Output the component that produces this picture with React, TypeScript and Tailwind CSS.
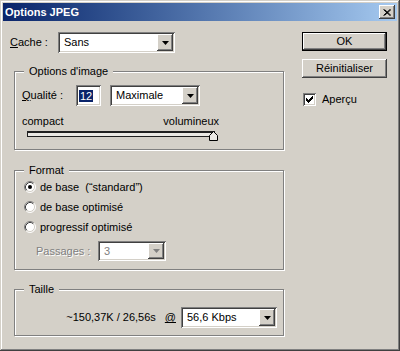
import React from 'react'

// Windows classic bevels
const sunken =
  'shadow-[inset_1px_1px_0_#808080,inset_-1px_-1px_0_#ffffff,inset_2px_2px_0_#404040,inset_-2px_-2px_0_#d4d0c8]'
const raised =
  'shadow-[inset_-1px_-1px_0_#404040,inset_1px_1px_0_#ffffff,inset_-2px_-2px_0_#808080,inset_2px_2px_0_#d4d0c8]'

function Arrow({ disabled }: { disabled?: boolean }) {
  return (
    <svg width="7" height="4" viewBox="0 0 7 4">
      <path d="M0 0h7L3.5 4z" fill={disabled ? '#808080' : '#000'} />
    </svg>
  )
}

function Combo({ value, className, disabled }: { value: string; className: string; disabled?: boolean }) {
  return (
    <div className={`flex bg-white p-[2px] ${sunken} ${className}`}>
      <span className={`flex-1 pl-[4px] self-center leading-[13px] ${disabled ? 'text-[#808080]' : 'text-black'}`}>
        {value}
      </span>
      <span className={`flex w-[16px] items-center justify-center bg-[#d4d0c8] ${raised}`}>
        <Arrow disabled={disabled} />
      </span>
    </div>
  )
}

function Radio({ checked }: { checked?: boolean }) {
  return (
    <svg width="12" height="12" viewBox="0 0 12 12" className="shrink-0">
      <circle cx="6" cy="6" r="5" fill="#fff" />
      <path d="M2.11 9.89A5.5 5.5 0 0 1 9.89 2.11" fill="none" stroke="#808080" />
      <path d="M9.89 2.11A5.5 5.5 0 0 1 2.11 9.89" fill="none" stroke="#fff" />
      <path d="M2.82 9.18A4.5 4.5 0 0 1 9.18 2.82" fill="none" stroke="#404040" />
      <path d="M9.18 2.82A4.5 4.5 0 0 1 2.82 9.18" fill="none" stroke="#d4d0c8" />
      {checked && <circle cx="6" cy="6" r="2" fill="#000" />}
    </svg>
  )
}

function Group({ title, className, children }: { title: string; className: string; children: React.ReactNode }) {
  return (
    <fieldset
      className={`ml-[4px] w-[270px] border border-[#808080] shadow-[inset_1px_1px_0_#ffffff,1px_1px_0_#ffffff] ${className}`}
    >
      <legend className="ml-[9px] bg-[#d4d0c8] px-[5px] leading-[13px]">{title}</legend>
      {children}
    </fieldset>
  )
}

export default function App() {
  return (
    <div className="flex h-[351px] w-[400px] flex-col bg-[#d4d0c8] p-[3px] font-['Liberation_Sans',Arial,sans-serif] text-[11px] text-black shadow-[inset_-1px_-1px_0_#404040,inset_1px_1px_0_#d4d0c8,inset_-2px_-2px_0_#808080,inset_2px_2px_0_#ffffff]">
      {/* Title bar */}
      <div className="flex h-[18px] items-center justify-between bg-gradient-to-r from-[#0a246a] to-[#a6caf0] pl-[2px] pr-[2px]">
        <span className="font-bold text-white">Options JPEG</span>
        <button className={`flex h-[14px] w-[16px] items-center justify-center bg-[#d4d0c8] ${raised}`}>
          <svg width="8" height="7" viewBox="0 0 8 7">
            <path d="M0.5 0.5L7 6.5M1.5 0.5L8 6.5M7 0.5L0.5 6.5M8 0.5L1.5 6.5" stroke="#000" strokeWidth="1" />
          </svg>
        </button>
      </div>

      <div className="flex pt-[11px]">
        {/* Left column */}
        <div className="w-[283px] pl-[7px]">
          <div className="flex h-[21px] items-center">
            <span className="w-[48px]">
              <span className="underline">C</span>ache :
            </span>
            <Combo value="Sans" className="h-[21px] w-[117px]" />
          </div>

          <Group title="Options d'image" className="mt-[12px] pb-[8px]">
            <div className="flex h-[21px] items-center pl-[7px] pt-0 mt-[7px]">
              <span className="w-[54px]">
                <span className="underline">Q</span>ualité :
              </span>
              <div className={`flex h-[21px] w-[25px] items-center bg-white pl-[2px] ${sunken}`}>
                <span className="ml-[1px] bg-[#0a246a] px-[1px] leading-[12px] text-white">12</span>
              </div>
              <Combo value="Maximale" className="ml-[9px] h-[21px] w-[90px]" />
            </div>
            <div className="mt-[9px] flex w-[204px] justify-between pl-[7px] leading-[13px]">
              <span>compact</span>
              <span>volumineux</span>
            </div>
            <div className="relative ml-[12px] mt-[3px] h-[10px] w-[191px]">
              <div className="h-[6px] w-[188px] border border-[#202020] border-t-2 bg-[#ebe9e4]" />
              <svg width="9" height="10" viewBox="0 0 9 10" className="absolute right-0 top-0">
                <path d="M0.5 9.5V4.5L4.5 0.5L8.5 4.5V9.5Z" fill="#ebe9e4" stroke="#000" />
              </svg>
            </div>
          </Group>

          <Group title="Format" className="mt-[14px] pb-[8px]">
            <div className="pl-[9px]">
              {[
                ['de base  (“standard”)', true],
                ['de base optimisé', false],
                ['progressif optimisé', false]
              ].map(([label, checked]) => (
                <div key={label as string} className="flex h-[20px] items-center gap-[4px]">
                  <Radio checked={checked as boolean} />
                  <span className="whitespace-pre">{label as string}</span>
                </div>
              ))}
            </div>
            <div className="mt-[4px] flex items-center pl-[21px]">
              <span className="w-[62px] text-[#808080] [text-shadow:1px_1px_0_#fff]">Passages :</span>
              <Combo value="3" disabled className="h-[20px] w-[68px]" />
            </div>
          </Group>

          <Group title="Taille" className="mt-[13px] pb-[7px]">
            <div className="mt-[11px] flex items-center justify-end pr-[6px]">
              <span className="mr-[9px]">~150,37K / 26,56s</span>
              <span className="mr-[5px] underline">@</span>
              <Combo value="56,6 Kbps" className="h-[21px] w-[96px]" />
            </div>
          </Group>
        </div>

        {/* Right column */}
        <div className="ml-[16px] flex w-[85px] flex-col">
          <button className="h-[19px] w-[85px] border border-black bg-[#d4d0c8] shadow-[inset_-1px_-1px_0_#404040,inset_1px_1px_0_#ffffff,inset_-2px_-2px_0_#808080]">
            OK
          </button>
          <button className={`mt-[8px] h-[19px] w-[85px] bg-[#d4d0c8] ${raised}`}>Réinitialiser</button>
          <label className="ml-[1px] mt-[13px] flex items-center gap-[6px]">
            <span className={`flex h-[13px] w-[13px] items-center justify-center bg-white ${sunken}`}>
              <svg width="7" height="7" viewBox="0 0 7 7">
                <path d="M0 2h1v1h1v1h1v-1h1v-1h1v-1h1v-1h1v3h-1v1h-1v1h-1v1h-1v1h-1v-1h-1v-1h-1z" fill="#000" />
              </svg>
            </span>
            Aperçu
          </label>
        </div>
      </div>
    </div>
  )
}
